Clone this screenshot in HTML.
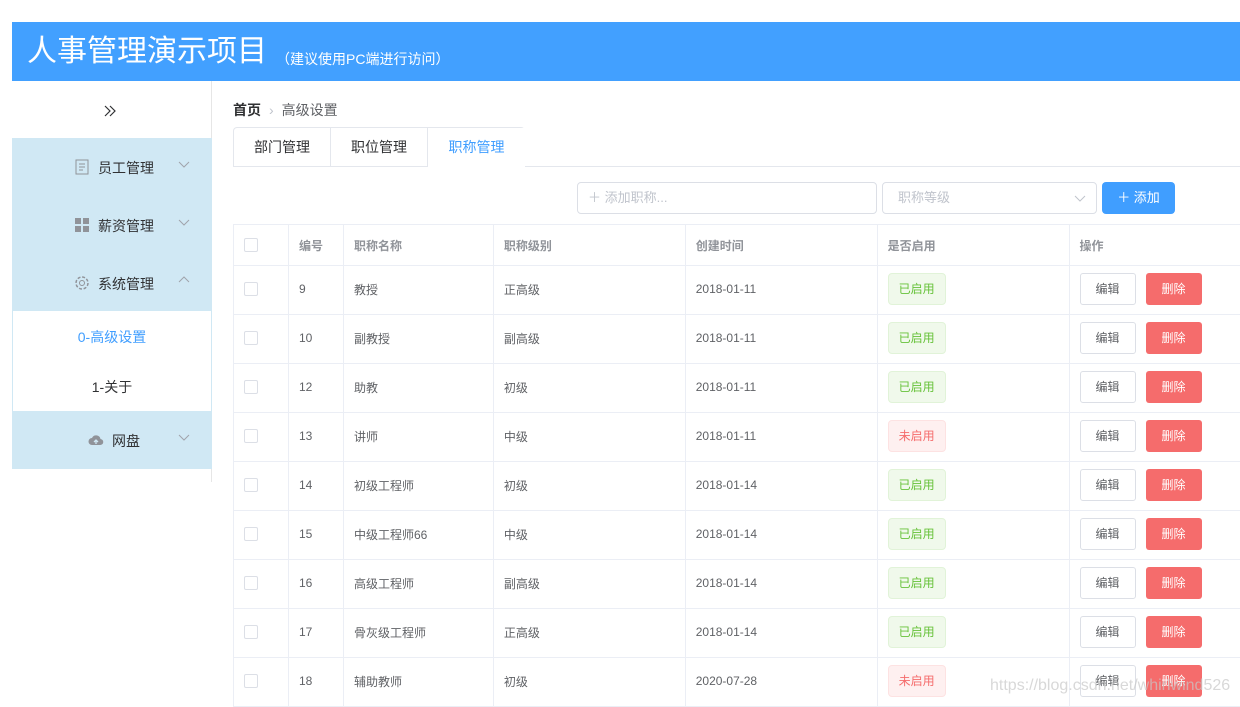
<!DOCTYPE html>
<html><head><meta charset="utf-8"><style>
*{margin:0;padding:0;box-sizing:border-box}
body{width:1240px;height:705px;overflow:hidden;background:#fff;font-family:"Liberation Sans","Noto Sans CJK SC",sans-serif;position:relative;color:#606266}
.a{position:absolute}
.hdr{left:12px;top:22px;width:1228px;height:59px;background:#42a0ff;color:#fff}
.hdr .t{position:absolute;left:15px;top:12px;font-size:30px;line-height:36px}
.hdr .s{position:absolute;left:264px;top:27px;font-size:14px}
.side{left:12px;top:81px;width:200px;height:401px;border-right:1px solid #e6e6e6}
.mi{position:absolute;left:0;width:200px;height:58px;background:#d0e8f4;font-size:14px;color:#303133}
.mi .l{position:absolute;left:86px;top:20px}
.mi .ic{position:absolute;left:62px;top:21px;width:16px;height:16px}
.mi .ar{position:absolute;left:166px;top:22px;width:12px;height:8px}
.sub{position:absolute;left:0;top:230px;width:200px;height:100px;background:#fff;border-left:1px solid #d0e8f4;border-right:1px solid #d0e8f4;font-size:14px;text-align:center}
td,th{border-right:1px solid #ebeef5;border-bottom:1px solid #ebeef5;font-size:12px;text-align:left;padding-left:10px;font-weight:normal}
th{height:41px;color:#909399;font-weight:bold}
td{height:49px;color:#606266;padding-bottom:2px}
table{border-collapse:collapse;position:absolute;left:233px;top:224px;border-top:1px solid #ebeef5;border-left:1px solid #ebeef5}
.cb{display:inline-block;width:14px;height:14px;border:1px solid #dcdfe6;border-radius:2px;background:#fff;vertical-align:middle}
.tg{display:inline-block;width:58px;height:32px;line-height:30px;text-align:center;border-radius:4px;font-size:12px}
.on{background:#f0f9eb;border:1px solid #e1f3d8;color:#67c23a}
.off{background:#fef0f0;border:1px solid #fde2e2;color:#f56c6c}
.be{display:inline-block;width:56px;height:32px;line-height:30px;text-align:center;border:1px solid #dcdfe6;border-radius:3px;color:#606266;background:#fff}
.bd{display:inline-block;width:56px;height:32px;line-height:32px;text-align:center;border-radius:3px;background:#f56c6c;color:#fff;margin-left:10px}
</style></head><body>
<div class="a hdr"><span class="t">人事管理演示项目</span><span class="s">（建议使用PC端进行访问）</span></div>
<div class="a side">
<svg style="position:absolute;left:92px;top:24px" width="12" height="12" viewBox="0 0 12 12"><path d="M1 1l5 5-5 5M6 1l5 5-5 5" fill="none" stroke="#303133" stroke-width="1.2"/></svg>
<div class="mi" style="top:57px"><svg class="ic" viewBox="0 0 16 16"><rect x="2" y="1" width="12" height="14" fill="none" stroke="#909399"/><path d="M5 5h6M5 8h6M5 11h4" stroke="#909399"/></svg><span class="l">员工管理</span><svg class="ar" viewBox="0 0 12 8"><path d="M1 2l5 5 5-5" fill="none" stroke="#a0a4ab"/></svg></div>
<div class="mi" style="top:115px"><svg class="ic" viewBox="0 0 16 16"><rect x="1" y="1" width="6" height="6" fill="#909399"/><rect x="9" y="1" width="6" height="6" fill="#909399"/><rect x="1" y="9" width="6" height="6" fill="#909399"/><rect x="9" y="9" width="6" height="6" fill="#909399"/></svg><span class="l">薪资管理</span><svg class="ar" viewBox="0 0 12 8"><path d="M1 2l5 5 5-5" fill="none" stroke="#a0a4ab"/></svg></div>
<div class="mi" style="top:173px"><svg class="ic" viewBox="0 0 16 16"><circle cx="8" cy="8" r="6" fill="none" stroke="#909399" stroke-width="1.5" stroke-dasharray="3 1.7"/><circle cx="8" cy="8" r="2.5" fill="none" stroke="#909399"/></svg><span class="l">系统管理</span><svg class="ar" viewBox="0 0 12 8"><path d="M1 6l5-5 5 5" fill="none" stroke="#a0a4ab"/></svg></div>
<div class="sub"><div style="position:absolute;top:16px;width:100%;color:#409eff">0-高级设置</div><div style="position:absolute;top:66px;width:100%;color:#303133">1-关于</div></div>
<div class="mi" style="top:330px"><svg class="ic" style="left:76px" viewBox="0 0 16 16"><path d="M4 13a3.5 3.5 0 0 1 0-7 4.5 4.5 0 0 1 8.5 1A3 3 0 0 1 12 13z" fill="#909399"/><path d="M8 12V8M6 10l2-2 2 2" stroke="#d0e8f4" stroke-width="1.3" fill="none"/></svg><span class="l" style="left:100px">网盘</span><svg class="ar" viewBox="0 0 12 8"><path d="M1 2l5 5 5-5" fill="none" stroke="#a0a4ab"/></svg></div>
</div>
<div class="a" style="left:233px;top:100px;font-size:14px"><b style="color:#303133">首页</b><span style="color:#c0c4cc;margin:0 8px">›</span><span>高级设置</span></div>
<div class="a" style="left:233px;top:166px;width:1007px;height:1px;background:#e4e7ed"></div>
<div class="a" style="left:233px;top:127px;width:292px;height:40px;border:1px solid #e4e7ed;border-bottom:none;border-radius:4px 4px 0 0;font-size:14px;color:#303133">
<div class="a" style="left:0;width:97px;height:39px;line-height:39px;text-align:center;border-right:1px solid #e4e7ed">部门管理</div>
<div class="a" style="left:97px;width:97px;height:39px;line-height:39px;text-align:center;border-right:1px solid #e4e7ed">职位管理</div>
<div class="a" style="left:194px;width:97px;height:40px;line-height:39px;text-align:center;color:#409eff;background:#fff">职称管理</div>
</div>
<div class="a" style="left:577px;top:182px;width:300px;height:32px;border:1px solid #dcdfe6;border-radius:4px;font-size:13px;color:#c0c4cc;line-height:30px;padding-left:10px">＋ 添加职称...</div>
<div class="a" style="left:882px;top:182px;width:215px;height:32px;border:1px solid #dcdfe6;border-radius:4px;font-size:13px;color:#c0c4cc;line-height:30px;padding-left:15px">职称等级<svg style="position:absolute;right:10px;top:12px" width="12" height="8" viewBox="0 0 12 8"><path d="M1 1l5 5 5-5" fill="none" stroke="#c0c4cc"/></svg></div>
<div class="a" style="left:1102px;top:182px;width:73px;height:32px;background:#409eff;border-radius:4px;color:#fff;font-size:13px;line-height:32px;text-align:center">＋ 添加</div>
<table>
<tr><th style="width:55px"><span class="cb"></span></th><th style="width:55px">编号</th><th style="width:150px">职称名称</th><th style="width:192px">职称级别</th><th style="width:192px">创建时间</th><th style="width:192px">是否启用</th><th style="width:171px;border-right:none">操作</th></tr>
<tr><td><span class="cb"></span></td><td>9</td><td>教授</td><td>正高级</td><td>2018-01-11</td><td><span class="tg on">已启用</span></td><td style="border-right:none"><span class="be">编辑</span><span class="bd">删除</span></td></tr>
<tr><td><span class="cb"></span></td><td>10</td><td>副教授</td><td>副高级</td><td>2018-01-11</td><td><span class="tg on">已启用</span></td><td style="border-right:none"><span class="be">编辑</span><span class="bd">删除</span></td></tr>
<tr><td><span class="cb"></span></td><td>12</td><td>助教</td><td>初级</td><td>2018-01-11</td><td><span class="tg on">已启用</span></td><td style="border-right:none"><span class="be">编辑</span><span class="bd">删除</span></td></tr>
<tr><td><span class="cb"></span></td><td>13</td><td>讲师</td><td>中级</td><td>2018-01-11</td><td><span class="tg off">未启用</span></td><td style="border-right:none"><span class="be">编辑</span><span class="bd">删除</span></td></tr>
<tr><td><span class="cb"></span></td><td>14</td><td>初级工程师</td><td>初级</td><td>2018-01-14</td><td><span class="tg on">已启用</span></td><td style="border-right:none"><span class="be">编辑</span><span class="bd">删除</span></td></tr>
<tr><td><span class="cb"></span></td><td>15</td><td>中级工程师66</td><td>中级</td><td>2018-01-14</td><td><span class="tg on">已启用</span></td><td style="border-right:none"><span class="be">编辑</span><span class="bd">删除</span></td></tr>
<tr><td><span class="cb"></span></td><td>16</td><td>高级工程师</td><td>副高级</td><td>2018-01-14</td><td><span class="tg on">已启用</span></td><td style="border-right:none"><span class="be">编辑</span><span class="bd">删除</span></td></tr>
<tr><td><span class="cb"></span></td><td>17</td><td>骨灰级工程师</td><td>正高级</td><td>2018-01-14</td><td><span class="tg on">已启用</span></td><td style="border-right:none"><span class="be">编辑</span><span class="bd">删除</span></td></tr>
<tr><td><span class="cb"></span></td><td>18</td><td>辅助教师</td><td>初级</td><td>2020-07-28</td><td><span class="tg off">未启用</span></td><td style="border-right:none"><span class="be">编辑</span><span class="bd">删除</span></td></tr>
</table>
<div class="a" style="left:990px;top:677px;font-size:16px;color:rgba(200,200,200,0.7)">https://blog.csdn.net/whirlwind526</div>
</body></html>
